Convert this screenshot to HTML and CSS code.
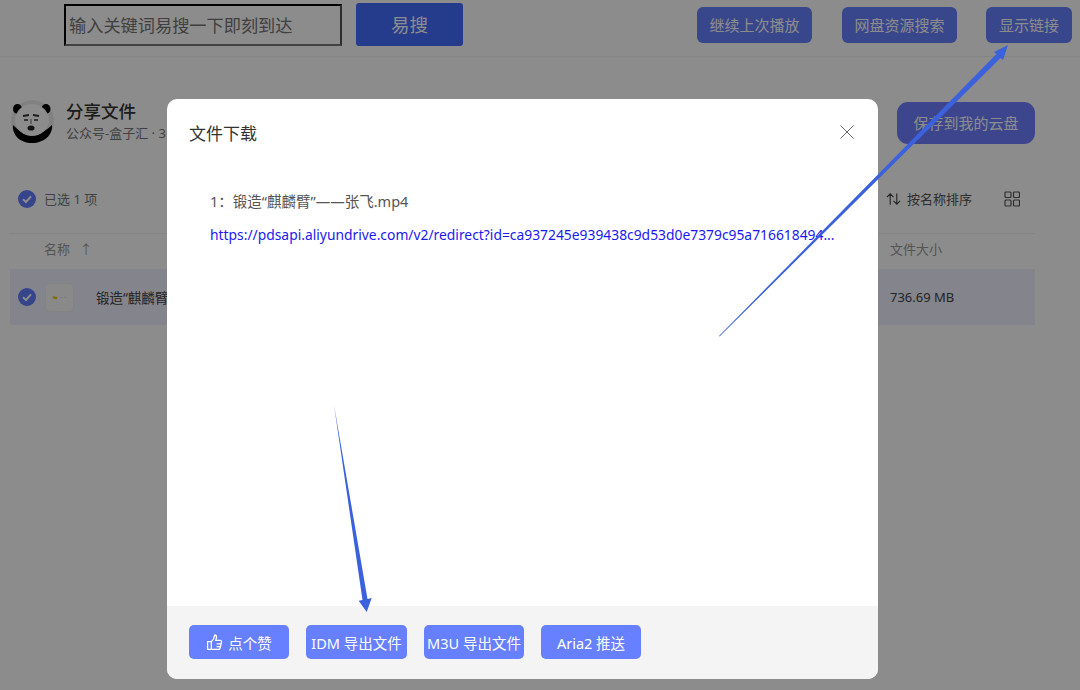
FILE: index.html
```html
<!DOCTYPE html>
<html lang="zh-CN">

<head>
  <meta charset="UTF-8">
  <title>文件下载</title>
  <link rel="stylesheet" href="styles.css">
</head>

<body>
  <div class="page">
    <header class="topbar">
      <input type="text" class="search-box" placeholder="输入关键词易搜一下即刻到达">
      <button class="search-btn">易搜</button>
      <div class="top-actions">
        <button class="top-btn">继续上次播放</button>
        <button class="top-btn">网盘资源搜索</button>
        <button class="top-btn top-btn-short">显示链接</button>
      </div>
    </header>

    <main class="share">
      <section class="share-head">
        <svg class="avatar" viewBox="0 0 43 43">
          <circle cx="21.500" cy="21.500" r="21.500" fill="#ececec" />
          <ellipse cx="6.500" cy="9" rx="4.500" ry="5" fill="#000" />
          <ellipse cx="35" cy="9" rx="4.500" ry="5" fill="#000" />
          <path d="M2 25c5 5 10 9 19 9s15-4 20-9c1 10-8 18-20 18S1 35 2 25z" fill="#000" />
          <ellipse cx="21" cy="20" rx="17" ry="16" fill="#fff" />
          <path d="M12 16l6-1M22 15l6 1" stroke="#333" stroke-width="1.800" />
          <path d="M13 20h4M23 20h4" stroke="#333" stroke-width="1.600" />
          <path d="M20 19v5" stroke="#999" stroke-width="1.400" />
          <ellipse cx="20" cy="28" rx="3.500" ry="2.600" fill="#222" />
        </svg>
        <div class="share-info">
          <div class="share-title">分享文件</div>
          <div class="share-sub">公众号-盒子汇 · 3 天前</div>
        </div>
        <button class="save-btn">保存到我的云盘</button>
      </section>

      <section class="toolbar">
        <span class="check">
          <svg viewBox="0 0 18 18">
            <path d="M5 9.2l3 2.8 5-5.6" />
          </svg>
        </span>
        <span class="selected">已选 1 项</span>
        <span class="sort">
          <svg class="sort-icon" viewBox="0 0 16 14">
            <path d="M4.500 13V1.500M1 5l3.500-3.500L8 5M11.500 1v11.500M8 9l3.500 3.500L15 9" />
          </svg>
          按名称排序
        </span>
        <svg class="grid-icon" viewBox="0 0 16 16">
          <rect x="1" y="1" width="6" height="5.500" rx="1" />
          <rect x="9.500" y="1" width="6" height="5.500" rx="1" />
          <rect x="1" y="9" width="6" height="6" rx="1" />
          <rect x="9.500" y="9" width="6" height="6" rx="1" />
        </svg>
      </section>

      <section class="table-head">
        <span class="col-name">名称 <i class="up">↑</i></span>
        <span class="col-size">文件大小</span>
      </section>

      <section class="file-row">
        <span class="check">
          <svg viewBox="0 0 18 18">
            <path d="M5 9.2l3 2.8 5-5.6" />
          </svg>
        </span>
        <span class="thumb">
          <svg viewBox="0 0 28 28">
            <path d="M7 12.500l5 1-1 2.500-4-1z" fill="#f2c230" />
            <path d="M15 14h2M19 13.800h2" stroke="#ddd" stroke-width="1" />
          </svg>
        </span>
        <span class="file-name">锻造“麒麟臂”——张飞.mp4</span>
        <span class="file-size">736.69 MB</span>
      </section>
    </main>
  </div>

  <div class="mask"></div>

  <div class="modal">
    <div class="modal-head">
      <span class="modal-title">文件下载</span>
      <svg class="close" viewBox="0 0 14 14">
        <path d="M.5.500l13 13M13.500.500l-13 13" />
      </svg>
    </div>
    <div class="modal-body">
      <div class="file-line">1：锻造“麒麟臂”——张飞.mp4</div>
      <a class="file-link">https://pdsapi.aliyundrive.com/v2/redirect?id=ca937245e939438c9d53d0e7379c95a716618494...</a>
    </div>
    <div class="modal-foot">
      <button class="foot-btn">
        <svg class="thumb-up" viewBox="0 0 16 16">
          <path d="M5 7.200v7.300H1.500V7.200zM5 7.200c1.700-1.300 2.800-3 3-5.700 0-1 1.900-.8 1.900 1 0 1.300-.3 2.300-.7 3.500h4c1.300 0 1.600 1 1.300 1.900l-1.200 5.300c-.2.800-.7 1.300-1.500 1.300H5M10 9.300h4.300M10 11.800h3.800" />
        </svg>
        点个赞
      </button>
      <button class="foot-btn foot-btn-wide">IDM 导出文件</button>
      <button class="foot-btn">M3U 导出文件</button>
      <button class="foot-btn">Aria2 推送</button>
    </div>
  </div>

  <!-- annotation arrows drawn over the screenshot -->
  <svg class="arrows" viewBox="0 0 1080 690">
    <path d="M719 336L996.500 54 994 52 1008 45 1003 60 1000.500 58 719.500 336.500z" />
    <path d="M334 405L362.500 600 358.700 600.700 366.700 612 371.700 598 367.500 599z" />
  </svg>
</body>

</html>
```

FILE: styles.css
```css
* {
  margin: 0;
  padding: 0;
  box-sizing: border-box;
}

html, body {
  height: 100%;
  overflow: hidden;
}

body {
  font-family: "Noto Sans", "Noto Sans CJK SC", sans-serif;
  background-color: #fff;
  color: #333;
}

button {
  border: none;
  font-family: inherit;
  color: #fff;
  background-color: #6680ff;
}

.page {
  height: 690px;
}

/* top bar */
.topbar {
  display: flex;
  align-items: flex-start;
  height: 57px;
  padding: 3px 8px 0 64px;
  border-bottom: 1px solid #f0f0f0;
}

.search-box {
  width: 278px;
  height: 42px;
  margin-top: 1px;
  padding: 0 3px;
  border: 2px solid;
  border-color: #000 #555 #777 #000;
  outline: none;
  background: transparent;
  font-family: inherit;
  font-size: 17.200px;
}

.search-box::placeholder {
  color: #757575;
}

.search-btn {
  width: 107px;
  height: 43px;
  margin-left: 14px;
  padding-bottom: 2px;
  border-radius: 3px;
  background-color: #446dff;
  font-size: 18.500px;
}

.top-actions {
  display: flex;
  gap: 29px;
  margin-left: auto;
  margin-top: 4px;
}

.top-btn {
  width: 115px;
  height: 36px;
  padding-bottom: 2px;
  border-radius: 6px;
  font-size: 15px;
}

.top-btn:first-child {
  margin-right: 1px;
}

.top-btn-short {
  width: 86px;
}

/* share page behind the dialog */
.share {
  padding: 0 45px 0 10px;
}

.share-head {
  display: flex;
  align-items: center;
  height: 46px;
  margin-top: 43px;
  padding-left: 1px;
}

.avatar {
  width: 43px;
  height: 43px;
  margin-bottom: 3px;
}

.share-info {
  margin: 0 0 5px 12px;
}

.share-title {
  font-size: 17.500px;
  font-weight: 500;
  line-height: 24px;
  color: #333;
}

.share-sub {
  font-size: 13px;
  line-height: 20px;
  color: #777;
}

.save-btn {
  width: 138px;
  height: 42px;
  margin-left: auto;
  padding-bottom: 2px;
  border-radius: 11px;
  background-color: #6f80ff;
  font-size: 15px;
}

.toolbar {
  display: flex;
  align-items: center;
  height: 58px;
  margin-top: 30px;
  padding: 0 0 12px 8px;
  border-bottom: 1px solid #f2f2f2;
  font-size: 13px;
  color: #777;
}

.check {
  display: block;
  width: 18px;
  height: 18px;
  border-radius: 50%;
  background-color: #637dff;
}

.check svg {
  display: block;
  fill: none;
  stroke: #fff;
  stroke-width: 2;
}

.selected {
  margin-left: 8px;
}

.sort {
  display: flex;
  align-items: center;
  gap: 6px;
  margin-left: auto;
  color: #555;
}

.sort-icon {
  width: 15px;
  height: 14px;
  fill: none;
  stroke: #444;
  stroke-width: 1.200;
}

.grid-icon {
  width: 16px;
  height: 16px;
  margin: 0 15px 0 32px;
  fill: none;
  stroke: #555;
  stroke-width: 1.200;
}

.table-head {
  display: flex;
  align-items: center;
  height: 35px;
  padding: 0 0 6px 34px;
  font-size: 13px;
  color: #999;
}

.up {
  margin-left: 6px;
  font-style: normal;
}

.col-size {
  margin-left: auto;
  width: 145px;
}

.file-row {
  display: flex;
  align-items: center;
  height: 56px;
  padding-left: 8px;
  background-color: #f0f0ff;
  font-size: 13.500px;
  color: #444;
}

.thumb {
  display: block;
  width: 29px;
  height: 29px;
  margin-left: 9px;
  border: 1px solid #eee;
  border-radius: 5px;
  background-color: #fafafa;
}

.thumb svg {
  display: block;
}

.file-name {
  margin-left: 22px;
}

.file-size {
  margin-left: auto;
  width: 145px;
  font-size: 13px;
}

/* dialog */
.mask {
  position: absolute;
  inset: 0;
  background-color: rgba(0, 0, 0, 0.45);
}

.modal {
  position: absolute;
  left: 167px;
  top: 99px;
  display: flex;
  flex-direction: column;
  width: 711px;
  height: 580px;
  border-radius: 10px;
  overflow: hidden;
  background-color: #fff;
}

.modal-head {
  display: flex;
  align-items: center;
  justify-content: space-between;
  height: 70px;
  padding: 0 24px 4px 22px;
}

.modal-title {
  font-size: 17px;
  color: #333;
}

.close {
  width: 14px;
  height: 14px;
  fill: none;
  stroke: #666;
}

.modal-body {
  flex: 1;
  padding: 22px 42px 0 43px;
}

.file-line {
  font-size: 14.500px;
  line-height: 20px;
  color: #555;
}

.file-link {
  display: block;
  margin-top: 14px;
  font-size: 13.850px;
  line-height: 20px;
  white-space: nowrap;
  color: #1a1aee;
}

.modal-foot {
  display: flex;
  gap: 17px;
  height: 73px;
  padding: 19px 22px 0;
  background-color: #f4f4f4;
}

.foot-btn {
  display: flex;
  align-items: center;
  justify-content: center;
  gap: 5px;
  width: 100px;
  height: 34px;
  border-radius: 5px;
  font-size: 14.500px;
  white-space: nowrap;
}

.foot-btn-wide {
  width: 101px;
}

.thumb-up {
  width: 17px;
  height: 17px;
  fill: none;
  stroke: #fff;
  stroke-width: 1.200;
}

/* annotation arrows */
.arrows {
  position: absolute;
  left: 0;
  top: 0;
  width: 1080px;
  height: 690px;
  fill: #3b61dd;
  pointer-events: none;
}
```
